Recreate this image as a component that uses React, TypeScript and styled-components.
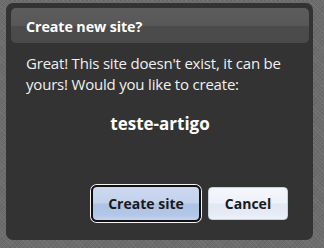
import React from "react";
import styled, { createGlobalStyle } from "styled-components";

const Global = createGlobalStyle`
  html, body { margin: 0; padding: 0; }
  body {
    width: 324px;
    height: 248px;
    overflow: hidden;
    background-color: #6c6c6c;
    background-image:
      repeating-linear-gradient(45deg, rgba(255,255,255,0.06) 0px, rgba(255,255,255,0.06) 1px, transparent 1px, transparent 3px),
      repeating-linear-gradient(-45deg, rgba(0,0,0,0.06) 0px, rgba(0,0,0,0.06) 1px, transparent 1px, transparent 3px);
    font-family: "Open Sans", "Noto Sans", "Liberation Sans", sans-serif;
  }
`;

const Page = styled.div`
  box-sizing: border-box;
  width: 324px;
  height: 248px;
  padding: 3px 11px 8px 6px;
  display: flex;
`;

const Dialog = styled.div`
  box-sizing: border-box;
  flex: 1;
  display: flex;
  flex-direction: column;
  background: #333333;
  border-radius: 7px;
  padding: 5px 4px 0 5px;
`;

const Header = styled.div`
  position: relative;
  box-sizing: border-box;
  height: 35px;
  border-radius: 5px;
  overflow: hidden;
  background: linear-gradient(to bottom, #5d5d5d 0%, #575757 50%, #4b4b4b 52%, #4a4a4a 100%);
  display: flex;
  align-items: center;
  padding: 2px 0 0 15px;
`;

const Title = styled.h1`
  margin: 0;
  font-size: 14.3px;
  font-weight: 700;
  color: #ffffff;
  letter-spacing: -0.1px;
`;

const Body = styled.div`
  padding: 10px 10px 0 15px;
  color: #f0f0f0;
  font-size: 15px;
  line-height: 21px;
`;

const Message = styled.p`
  margin: 0;
  max-width: 270px;
  letter-spacing: -0.2px;
`;

const SiteName = styled.div`
  margin-top: 18px;
  text-align: center;
  padding-right: 5px;
  font-weight: 700;
  font-size: 17px;
  color: #ffffff;
`;

const Actions = styled.div`
  margin-top: auto;
  margin-bottom: 18px;
  display: flex;
  justify-content: flex-end;
  align-items: center;
  gap: 6px;
  padding-right: 21px;
`;

const Button = styled.button<{ $primary?: boolean }>`
  box-sizing: border-box;
  height: ${(p) => (p.$primary ? "37px" : "33px")};
  width: ${(p) => (p.$primary ? "110px" : "80px")};
  border-radius: ${(p) => (p.$primary ? "6px" : "4px")};
  border: ${(p) => (p.$primary ? "2px solid #111" : "1px solid #c9cfdb")};
  box-shadow: ${(p) => (p.$primary ? "0 0 0 1px #f4f4f4" : "none")};
  background: ${(p) =>
    p.$primary
      ? "linear-gradient(to bottom, #cbd8ef 0%, #c3d2ec 48%, #adc2e4 52%, #b4c7e8 85%, #c4d3ee 100%)"
      : "linear-gradient(to bottom, #f5f7fc 0%, #eef1f9 48%, #e1e7f3 52%, #e6ebf6 85%, #eef2fa 100%)"};
  font-family: "Open Sans", "Noto Sans", "Liberation Sans", sans-serif;
  font-weight: 700;
  font-size: 14px;
  color: #1a1a1a;
  padding: 0;
  margin: ${(p) => (p.$primary ? "0 1px" : "0")};
  cursor: pointer;
`;

export default function App() {
  return (
    <>
      <Global />
      <Page>
        <Dialog>
          <Header>
            <Title>Create new site?</Title>
          </Header>
          <Body>
            <Message>
              Great! This site doesn't exist, it can be yours! Would you like to create:
            </Message>
            <SiteName>teste-artigo</SiteName>
          </Body>
          <Actions>
            <Button $primary>Create site</Button>
            <Button>Cancel</Button>
          </Actions>
        </Dialog>
      </Page>
    </>
  );
}
